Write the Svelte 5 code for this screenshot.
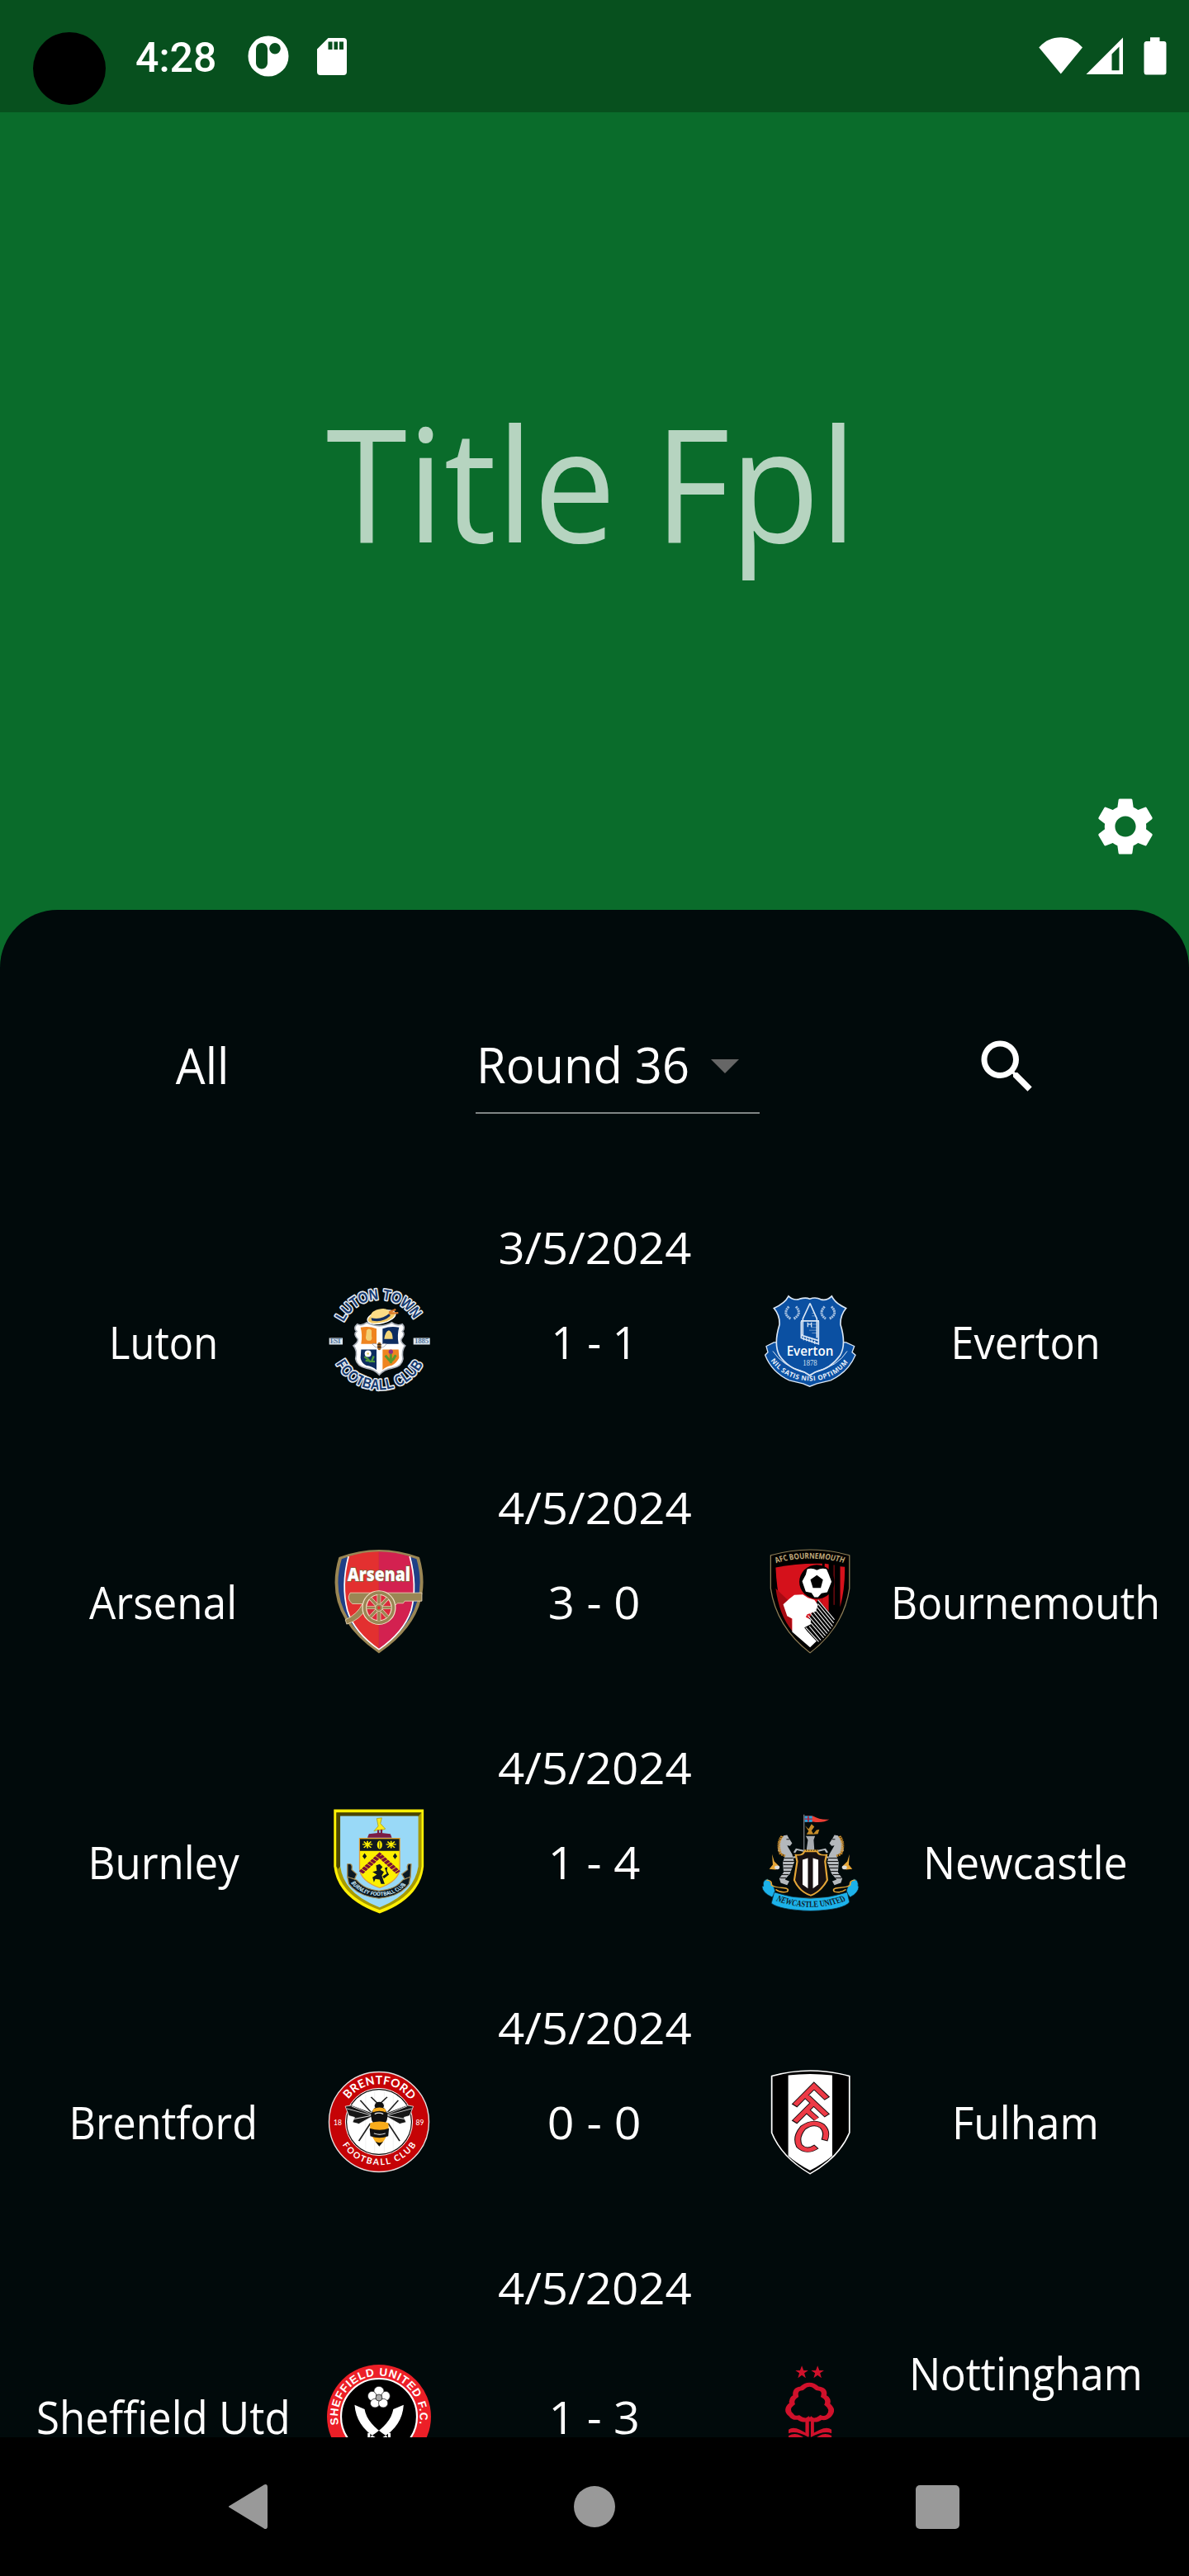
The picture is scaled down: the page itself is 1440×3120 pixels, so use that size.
<script>
  const matches = [
    { date: '3/5/2024', dateW: 232, home: 'Luton', homeW: 130, away: ['Everton'], awayW: 179, score: '1 - 1', scoreW: 102, left: luton, right: everton },
    { date: '4/5/2024', dateW: 233, home: 'Arsenal', homeW: 177, away: ['Bournemouth'], awayW: 324, score: '3 - 0', scoreW: 109, left: arsenal, right: bournemouth },
    { date: '4/5/2024', dateW: 233, home: 'Burnley', homeW: 181, away: ['Newcastle'], awayW: 246, score: '1 - 4', scoreW: 109, left: burnley, right: newcastle },
    { date: '4/5/2024', dateW: 233, home: 'Brentford', homeW: 226, away: ['Fulham'], awayW: 176, score: '0 - 0', scoreW: 111, left: brentford, right: fulham },
    { date: '4/5/2024', dateW: 233, home: 'Sheffield Utd', homeW: 306, away: ['Nottingham', 'Forest'], awayW: 281, score: '1 - 3', scoreW: 108, left: sheffield, right: forest }
  ];

  // Scales a label horizontally so that it is `width` pixels wide, side bearings aside.
  function fit(node, width) {
    const bearing = parseFloat(getComputedStyle(node).fontSize) * 0.04;
    node.style.transform = `scaleX(${width / (node.offsetWidth - bearing)})`;
  }
</script>

{#snippet luton()}
  <g transform="translate(-16 -21.5) scale(.33333)">
    <path id="lutonTop" d="M108 184A144 144 0 0 1 370 184" fill="none" />
    <path id="lutonBottom" d="M80 332A180 180 0 0 0 400 330" fill="none" />
    <g class="curved navy">
      <text><textPath href="#lutonTop" startOffset="2" textLength="314" lengthAdjust="spacingAndGlyphs">LUTON TOWN</textPath></text>
      <text><textPath href="#lutonBottom" startOffset="2" textLength="386" lengthAdjust="spacingAndGlyphs">FOOTBALL CLUB</textPath></text>
    </g>
    <path d="M158 190Q174 198 192 184Q216 196 238 196Q262 196 284 184Q300 198 322 190Q334 204 322 216Q334 226 318 244Q314 256 332 268Q318 284 324 316Q320 344 284 350Q256 354 238 374Q220 354 192 350Q158 344 152 316Q160 284 144 268Q162 256 160 244Q142 226 156 216Q142 204 158 190Z" fill="#fff" stroke="#aab0b8" stroke-width="5" />
    <path d="M170 202Q200 196 228 206V262H172Q178 230 170 202Z" fill="#ef8420" />
    <path d="M250 206Q280 196 310 202Q302 230 308 262H250Z" fill="#0d2c60" />
    <path d="M172 282H228V356Q214 344 190 340Q172 330 170 312Z" fill="#0d2c60" />
    <path d="M250 282H308L310 312Q302 330 284 340Q262 344 250 356Z" fill="#ef8420" />
    <path d="M192 212Q200 202 210 212V234Q214 244 206 250H196Q186 244 190 232Z" fill="#f3cf73" />
    <path d="M256 244Q260 214 273 212Q286 216 287 244Z" fill="#f5d578" />
    <path d="M184 308L196 316L206 328M210 326L218 306M188 322L222 326" stroke="#4e9b3b" stroke-width="7" fill="none" />
    <circle cx="197" cy="297" r="12" fill="#fff" /><circle cx="197" cy="297" r="4" fill="#e6d16a" />
    <path d="M280 294V332M260 304L272 318L280 326M298 302L290 316L280 326" stroke="#5a9a2e" stroke-width="9" fill="none" />
    <circle cx="280" cy="290" r="8" fill="#8c2f87" />
    <path d="M212 262Q226 256 238 270Q250 256 264 262Q256 276 238 276Q222 276 212 262Z" fill="#fff" stroke="#889" stroke-width="2" />
    <ellipse cx="238" cy="270" rx="7" ry="14" fill="#a96420" /><path d="M232 264h12M232 273h12" stroke="#222" stroke-width="4" />
    <g transform="rotate(-14 245 160)">
      <ellipse cx="245" cy="164" rx="52" ry="22" fill="#f3c963" stroke="#fff" stroke-width="4" />
      <path d="M208 162Q204 134 242 134Q280 134 278 162Q244 180 208 162Z" fill="#fbdc86" />
      <path d="M208 158Q242 176 277 158V168Q244 186 208 168Z" fill="#142f60" />
      <path d="M274 158L308 164M276 154L302 150" stroke="#d8792c" stroke-width="7" />
    </g>
    <path d="M56 240H105V264H56ZM362 240H422V264H362Z" fill="#dfe8ef" />
    <g fill="#53759c" font-family="Liberation Serif, serif" font-weight="700" font-size="27">
      <text x="59" y="261" textLength="42">EST</text><text x="366" y="261" textLength="52">1885</text>
    </g>
  </g>
{/snippet}

{#snippet everton()}
  <g transform="translate(-18 -21.5) scale(.33333)">
    <path d="M112 256L84 270L90 292L80 302Q104 364 168 394L218 406L242 416L268 406L318 394Q382 364 408 302L396 292L404 270L374 256Z" fill="#0b50a2" stroke="#dbe7f5" stroke-width="4" />
    <path d="M165 88Q184 106 206 98Q228 92 242 98Q264 90 282 100Q304 106 322 88Q334 114 374 132Q352 158 354 192Q376 264 352 304Q318 352 262 364L242 376L222 364Q164 352 132 304Q110 264 132 192Q134 158 112 132Q152 114 165 88Z" fill="#0b50a2" stroke="#dbe7f5" stroke-width="5" />
    <path d="M108 288Q144 342 214 360L242 378L270 360Q344 342 378 288" fill="none" stroke="#dbe7f5" stroke-width="3" />
    <g fill="none" stroke="#dbe7f5">
      <path d="M243 114L217 170V230M243 114L268 170V240M217 178H272M210 178H276M211 180V240L274 262V180M211 230L276 250" stroke-width="5" />
      <path d="M220 236v12M230 239v12M240 242v12M250 245v12M260 250v12M235 184v16M248 184v16M235 190h13" stroke-width="4" />
      <path d="M250 150h8M250 160h12M252 190h18M246 202h24M240 212h30M250 222h20" stroke-width="2" opacity=".7" />
      <path d="M166 126Q142 152 172 170M192 126Q216 152 184 170M296 126Q272 152 300 170M321 126Q346 152 314 170" stroke-width="9" stroke-dasharray="6 2" opacity=".75" />
    </g>
    <text x="158" y="306" textLength="170" lengthAdjust="spacingAndGlyphs" fill="#fff" font-size="49" font-weight="600" font-family="Open Sans, sans-serif">Everton</text>
    <text x="217" y="340" textLength="52" lengthAdjust="spacingAndGlyphs" fill="#d3e1f2" font-size="29" font-family="Liberation Serif, serif">1878</text>
    <path id="evertonMotto" d="M97 318Q150 394 242 396Q336 394 391 316" fill="none" />
    <text fill="#e9f1fa" font-size="24" font-weight="700" font-family="Open Sans, sans-serif"><textPath href="#evertonMotto" startOffset="5" textLength="326">NIL SATIS NISI OPTIMUM</textPath></text>
  </g>
{/snippet}

{#snippet arsenal()}
  <g transform="translate(-16 -16.5) scale(.43367 .33333)">
    <path d="M74 80Q182 28 291 80Q336 280 182 420Q28 280 74 80Z" fill="#1f3f87" stroke="#9a8654" stroke-width="9" />
    <path d="M96 74Q139 56 182 56V414Q112 348 94 270Q76 180 96 74Z" fill="#e33030" />
    <path d="M182 56Q226 56 270 74Q290 180 272 270Q252 348 182 414Z" fill="#d32150" />
    <path d="M97 74Q76 180 94 270Q112 348 182 412Q252 348 272 270Q290 180 268 74" fill="none" stroke="#fff" stroke-width="4" />
    <path d="M102 206H302V236H254L250 244H234L218 262L150 258Q128 306 92 320L88 304Q122 284 136 246H108Q90 228 102 206Z" fill="#9a8654" stroke="#f0dfc3" stroke-width="2" />
    <ellipse cx="182" cy="260" rx="46" ry="61" fill="#9a8654" stroke="#f0dfc3" stroke-width="3" />
    <ellipse cx="182" cy="260" rx="35" ry="47" fill="#dc2a3c" stroke="#f0dfc3" stroke-width="3" />
    <path d="M182 212V308M148 260H216M158 226L206 294M206 226L158 294" stroke="#f0dfc3" stroke-width="11" />
    <path d="M182 212V308M148 260H216M158 226L206 294M206 226L158 294" stroke="#9a8654" stroke-width="8" />
    <ellipse cx="182" cy="260" rx="10" ry="13" fill="#9a8654" stroke="#f0dfc3" stroke-width="2" />
    <ellipse cx="182" cy="260" rx="4" ry="6" fill="#e33030" />
    <text x="94" y="163" textLength="176" lengthAdjust="spacingAndGlyphs" fill="#fff" stroke="#85633f" stroke-width="5" paint-order="stroke" font-size="68" font-weight="800" font-family="Open Sans, sans-serif">Arsenal</text>
  </g>
{/snippet}

{#snippet bournemouth()}
  <g transform="translate(-538 -16.5) scale(.43367 .33333)">
    <path d="M1276 70Q1386 29 1496 70V190Q1480 330 1386 424Q1292 330 1276 190Z" fill="#000" stroke="#8c7c55" stroke-width="3" />
    <path d="M1290 114Q1350 98 1420 100V270L1336 344Q1294 260 1290 114Z" fill="#d5111b" />
    <path d="M1290 190Q1300 290 1336 344L1330 240Z" fill="#a80a12" />
    <path d="M1427 100L1438 102V300L1420 320V240ZM1451 104V296M1470 110L1483 112Q1484 190 1470 258Z" fill="#d5111b" stroke="none" />
    <path d="M1445 103V262" stroke="#000" stroke-width="10" /><path d="M1453 105V250" stroke="#d5111b" stroke-width="2" />
    <ellipse cx="1405" cy="166" rx="49" ry="62" fill="#000" />
    <path d="M1378 120Q1392 114 1405 124Q1418 114 1432 120L1438 138L1446 166L1434 204L1418 208L1408 222H1398L1390 206L1374 202L1364 164L1374 140Z" fill="#fff" />
    <path d="M1405 142L1422 158L1416 188H1394L1387 158Z" fill="#000" />
    <path d="M1408 230L1456 300L1404 386L1370 340Z" fill="#000" />
    <path d="M1342 214L1366 212L1380 224L1398 232L1408 250L1402 274L1378 284L1374 294L1388 304V320L1370 332L1378 346L1404 382L1386 404L1336 348V300L1322 290L1311 248L1328 228Z" fill="#fff" />
    <g stroke="#e9e9e9" stroke-width="3">
      <path d="M1408 232L1454 304M1408 246L1452 316M1404 256L1449 328M1400 266L1444 336M1394 274L1439 346M1386 280L1434 354M1380 288L1429 362M1388 316L1424 370M1384 328L1416 378M1374 332L1410 384" />
    </g>
    <path id="cherriesName" d="M1291 98Q1386 65 1482 98" fill="none" />
    <text fill="#c2ab7c" font-size="29" font-weight="700" font-family="Open Sans, sans-serif"><textPath href="#cherriesName" textLength="192" lengthAdjust="spacingAndGlyphs">AFC BOURNEMOUTH</textPath></text>
  </g>
{/snippet}

{#snippet burnley()}
  <g transform="translate(-16 -11.5) scale(.43367 .33333)">
    <path d="M56 33H307V240Q298 356 184 411Q66 356 56 240Z" fill="#fff005" />
    <path d="M63 44H301V240Q290 348 184 398Q74 348 63 240Z" fill="#a79a00" />
    <path d="M63 44H301L291 60H74V240L68 250Q63 240 63 240Z" fill="#4a4500" />
    <path d="M74 57H292V240Q280 340 184 389Q84 340 74 240Z" fill="#99d9f7" />
    <path d="M150 136L154 122L184 118L214 122L218 136Z" fill="#7b1c45" />
    <path d="M176 66L190 64L186 84L200 104L190 108H178L168 112L180 94Z" fill="#f8ec1c" stroke="#a69b12" stroke-width="2" />
    <path d="M180 108V120M189 106V120" stroke="#7b1c45" stroke-width="5" />
    <path d="M128 138H240V250Q236 294 184 318Q132 294 128 250Z" fill="#fdf000" stroke="#e3a139" stroke-width="3" />
    <path d="M129 140H239V184H129Z" fill="#101820" />
    <path d="M136 160H164M150 148V174M140 150L160 172M160 150L140 172M202 160H230M216 148V174M206 150L226 172M226 150L206 172" stroke="#fdf000" stroke-width="4" />
    <ellipse cx="184" cy="162" rx="7" ry="15" fill="#fdf000" /><path d="M184 150V174" stroke="#101820" stroke-width="2" />
    <path d="M132 262L184 200L236 262" fill="none" stroke="#7b1038" stroke-width="15" stroke-dasharray="10 2" />
    <path d="M142 192L148 203L142 214L136 203ZM227 192L233 203L227 214L221 203Z" fill="#101820" />
    <path d="M174 236L184 232L192 242L186 252L196 260L190 274L198 304H188L184 288L172 286L168 298L164 280L176 270L164 260L176 256ZM192 276L204 266L198 246L206 242L204 256L210 270L196 284Z" fill="#101820" />
    <g fill="#0b1923" stroke="#a48c55" stroke-width="3">
      <path d="M94 232Q110 226 106 252L120 268L114 286L94 280ZM272 232Q258 226 262 252L246 268L254 286L270 280Z" />
      <path d="M94 278L120 290Q142 324 182 329Q228 324 248 290L270 278L266 304Q240 350 182 356Q126 350 98 304Z" />
    </g>
    <path id="claretsName" d="M103 300Q134 347 184 347Q236 347 265 296" fill="none" />
    <text fill="#c8e9fb" font-size="19" font-weight="700" font-family="Open Sans, sans-serif"><textPath href="#claretsName" textLength="186" lengthAdjust="spacingAndGlyphs">BURNLEY FOOTBALL CLUB</textPath></text>
  </g>
{/snippet}

{#snippet seahorse()}
  <path d="M1312 128L1322 126L1326 136L1336 156L1330 166L1322 164L1336 196L1342 224L1330 266L1316 288L1328 294L1322 308L1304 300L1300 284L1312 262L1310 226L1316 200L1296 184L1300 150Z" fill="#b4b8bc" />
  <path d="M1308 130Q1292 156 1304 196L1316 202" stroke="#c98b2a" stroke-width="8" stroke-dasharray="5 2" fill="none" />
  <path d="M1280 196L1286 222L1300 240L1290 252L1272 250L1282 234Z" fill="#e5a637" /><circle cx="1294" cy="244" r="7" fill="#ddd" />
  <path d="M1314 210H1340M1311 222H1342M1311 234H1340M1312 246H1336M1312 258H1332M1306 270H1326M1302 282H1320M1320 142h8" stroke="#111" stroke-width="3" />
  <path d="M1342 190L1348 178L1368 184M1338 208L1352 204" stroke="#b4b8bc" stroke-width="6" fill="none" />
{/snippet}

{#snippet newcastle()}
  <g transform="translate(-538 -11.5) scale(.43367 .33333)">
    <path d="M1369 52V184" stroke="#767b80" stroke-width="3" />
    <path d="M1371 57H1394Q1414 72 1440 69Q1422 84 1394 78H1371Z" fill="#ee3f36" />
    <path d="M1371 57H1392V79H1371Z" fill="#25a4dc" /><path d="M1371 68H1392M1381 57V79" stroke="#b02138" stroke-width="4" />
    <path d="M1372 92L1382 104L1390 86L1398 96L1390 110L1396 124H1376L1382 112ZM1394 124L1404 108L1412 106L1408 122Z" fill="#c48b29" />
    <path d="M1374 130H1400L1396 144L1398 180H1376L1380 144Z" fill="#a7abb0" />
    {@render seahorse()}
    <g transform="translate(2776 0) scale(-1 1)">{@render seahorse()}</g>
    <path d="M1346 198Q1366 202 1370 186H1406Q1410 202 1432 198L1428 222L1434 290Q1416 332 1388 346Q1356 332 1342 290L1350 222Z" fill="#171112" stroke="#e5a637" stroke-width="5" />
    <path d="M1365 216L1380 210V320L1365 306ZM1394 210L1409 216V306L1394 320Z" fill="#fff" />
    <path d="M1370 182H1408" stroke="#e5a637" stroke-width="6" stroke-dasharray="5 2" />
    <path d="M1280 340Q1300 354 1388 356Q1480 354 1496 340" fill="none" stroke="#e5a637" stroke-width="3" />
    <g fill="#1cb2ea" stroke="#0a2a38" stroke-width="2">
      <path d="M1256 312Q1252 290 1268 286Q1290 316 1288 336L1280 352Q1252 336 1252 312ZM1520 312Q1522 290 1508 286Q1486 316 1488 336L1498 352Q1522 336 1522 312Z" />
      <path d="M1286 334Q1386 378 1490 334L1496 370Q1480 398 1388 402Q1300 398 1278 374Z" />
    </g>
    <path d="M1264 290Q1280 290 1278 308Q1284 316 1310 318Q1330 320 1322 332Q1304 338 1290 324M1512 290Q1496 290 1498 308Q1492 316 1466 318Q1446 320 1454 332Q1472 338 1486 324" fill="none" stroke="#e5a637" stroke-width="4" />
    <path id="toonName" d="M1289 364Q1386 412 1488 364" fill="none" />
    <text fill="#10212a" font-size="32" font-weight="700" font-family="Liberation Serif, serif"><textPath href="#toonName" startOffset="1" textLength="204" lengthAdjust="spacingAndGlyphs">NEWCASTLE UNITED</textPath></text>
  </g>
{/snippet}

{#snippet brentford()}
  <circle cx="63" cy="63" r="60.5" fill="#c50306" stroke="#e8dede" stroke-width="1.4" />
  <circle cx="63" cy="63" r="39.5" fill="#fff" stroke="#111" stroke-width="1.4" />
  <circle cx="63" cy="63" r="40.6" fill="none" stroke="#fff" stroke-width="1" />
  <path id="beesTop" d="M25.5 36.5A46 46 0 0 1 100.5 36.5" fill="none" />
  <path id="beesBottom" d="M18 90A53 53 0 0 0 109 89" fill="none" />
  <g fill="#fff" font-family="Lato, sans-serif" font-weight="700">
    <text font-size="14"><textPath href="#beesTop" startOffset="1" textLength="87">BRENTFORD</textPath></text>
    <text font-size="10.5"><textPath href="#beesBottom" startOffset="1" textLength="106">FOOTBALL CLUB</textPath></text>
    <text x="8" y="66.500" font-size="8.500" font-weight="400">18</text><text x="107.500" y="66.500" font-size="8.500" font-weight="400">89</text>
  </g>
  <g transform="translate(-16 -16.5) scale(.43367 .33333)">
    <path d="M145 140V340M170 126V350M197 126V350M222 140V340" stroke="#e9e9e9" stroke-width="1.500" />
    <path d="M160 148L182 176L205 148M130 160L160 204M236 160L206 204M158 244L126 308M208 244L240 308" stroke="#222" stroke-width="4" fill="none" />
    <path d="M88 182L106 178L164 206V218L126 246L108 240L114 222L98 216ZM278 182L260 178L202 206V218L240 246L258 240L252 222L268 216Z" fill="#171717" stroke="#fff" stroke-width="2" />
    <path d="M92 190L160 214M106 182L160 210M112 228L160 216M274 190L206 214M260 182L206 210M254 228L206 216" stroke="#ddd" stroke-width="2.500" />
    <ellipse cx="183" cy="180" rx="13" ry="14" fill="#111" />
    <ellipse cx="183" cy="218" rx="23" ry="36" fill="#111" />
    <path d="M166 192Q184 180 200 192L202 204Q184 194 164 204Z" fill="#f8ac1b" />
    <path d="M170 210Q182 202 194 210" stroke="#eee" stroke-width="4" fill="none" />
    <path d="M158 242Q184 232 208 242Q214 286 183 326Q152 286 158 242Z" fill="#f8ac1b" />
    <path d="M156 262Q184 274 210 262L208 290Q184 302 158 290Z" fill="#111" />
    <path d="M168 280Q184 288 200 280" stroke="#fff" stroke-width="3" fill="none" />
    <path d="M172 310Q184 318 194 310L183 328Z" fill="#111" />
  </g>
{/snippet}

{#snippet fulham()}
  <g transform="translate(-538 -16.5) scale(.43367 .33333)">
    <path d="M1279 72Q1386 33 1496 72V278Q1468 366 1386 427Q1306 366 1279 278Z" fill="#000" stroke="#fff" stroke-width="4" />
    <path d="M1325 69Q1386 60 1448 69V362Q1422 390 1386 415Q1350 390 1325 362Z" fill="#fff" />
    <g fill="none" stroke-linejoin="miter">
      <g stroke="#191012" stroke-width="19">
        <path d="M1342 180L1397 108L1434 154M1371 139L1434 216M1342 240L1394 172M1376 196L1404 228M1426 306Q1436 274 1420 254Q1396 232 1366 260Q1344 294 1356 326Q1376 352 1404 328" />
      </g>
      <g stroke="#ed3a46" stroke-width="14">
        <path d="M1344 177L1397 108L1432 152M1371 139L1432 214M1344 237L1394 172M1376 196L1404 228M1427 303Q1436 274 1420 254Q1396 232 1366 260Q1344 294 1356 326Q1376 352 1402 330" />
      </g>
    </g>
  </g>
{/snippet}

{#snippet sheffield()}
  <circle cx="63" cy="63" r="63" fill="#ec1f27" />
  <circle cx="63" cy="63" r="46" fill="#000" stroke="#fff" stroke-width="2.200" />
  <path id="bladesName" d="M14.500 73.500A49.500 49.500 0 0 1 63 13.500A49.500 49.500 0 0 1 111.500 73.500" fill="none" />
  <text fill="#fff" font-size="13.500" font-weight="700" font-family="Liberation Sans, sans-serif"><textPath href="#bladesName" startOffset="1" textLength="174">SHEFFIELD UNITED F.C.</textPath></text>
  <g transform="translate(-16 -24) scale(.43367 .33333)">
    <g fill="#fff" stroke="#222" stroke-width="2">
      <ellipse cx="182" cy="168" rx="14" ry="17" /><ellipse cx="163" cy="186" rx="12" ry="17" /><ellipse cx="201" cy="186" rx="12" ry="17" />
      <ellipse cx="171" cy="212" rx="13" ry="16" /><ellipse cx="194" cy="212" rx="13" ry="16" /><ellipse cx="182" cy="192" rx="9" ry="12" fill="#aaa" />
    </g>
    <path d="M114 218L142 234Q148 286 206 334L194 350Q120 310 114 218ZM251 218L222 234Q216 286 158 334L170 350Q246 310 251 218Z" fill="#fff" />
    <path d="M154 320V340M211 320V340" stroke="#fff" stroke-width="7" />
  </g>
{/snippet}

{#snippet forest()}
  <g transform="translate(-538 -24) scale(.43367 .33333)" fill="#d0112b">
    <path id="star" d="M1363 76L1368 93H1381L1370 103L1374 121L1363 110L1352 121L1356 103L1345 93H1358Z" />
    <use href="#star" x="44" />
    <path d="M1363 158Q1384 132 1406 158Q1430 160 1424 186Q1440 198 1434 216Q1454 236 1438 258Q1428 270 1416 264Q1404 278 1386 270Q1366 278 1354 264Q1340 268 1334 256Q1314 236 1336 214Q1332 198 1346 186Q1342 160 1363 158Z" fill="none" stroke="#d0112b" stroke-width="15" />
    <path d="M1373 268L1383 258V332L1373 324ZM1388 258L1397 268V324L1388 332Z" />
    <path d="M1326 308Q1344 290 1382 328V336Q1346 310 1326 322ZM1446 308Q1428 290 1388 328V336Q1426 310 1446 322ZM1326 330Q1344 318 1360 330L1382 348V380H1326ZM1446 330Q1428 318 1412 330L1390 348V380H1446Z" />
  </g>
{/snippet}

<div class="screen">
  <header class="status">
    <div class="camera"></div>
    <span class="clock">4:28</span>
    <svg class="app-icon" viewBox="0 0 50 50">
      <path fill-rule="evenodd" fill="#fff" d="M25 .5a24.500 24.500 0 1 0 0 49a24.500 24.500 0 1 0 0-49ZM17 9a7 7 0 0 1 7 7V33.500a7 7 0 0 1-14 0V16a7 7 0 0 1 7-7ZM33 9a6.800 6.800 0 1 1 0 13.600a6.800 6.800 0 1 1 0-13.600Z" />
    </svg>
    <svg class="card-icon" viewBox="0 0 36 45">
      <path fill-rule="evenodd" fill="#fff" d="M13.500 0H32a4 4 0 0 1 4 4V41a4 4 0 0 1-4 4H4a4 4 0 0 1-4-4V13.500ZM13.500 4.500V14H18.500V4.500ZM20.500 4.500V14H25V4.500ZM27 4.500V14H32V4.500Z" />
    </svg>
    <svg class="signals" viewBox="0 0 156 46">
      <g fill="#fff">
        <path d="M.3 12.500Q11 .2 27 .2T53 12.500L26.800 44.500Z" />
        <path fill-rule="evenodd" d="M57.500 45L102 .5V45ZM88.500 40.300H97.500V11.500L88.500 20.500Z" />
        <path d="M135 .2H146.500V5H151.500A3 3 0 0 1 154.500 8V42.500A3 3 0 0 1 151.500 45.500H130A3 3 0 0 1 127.500 42.500V8A3 3 0 0 1 130 5H135Z" />
      </g>
    </svg>
  </header>

  <section class="hero">
    <h1><span use:fit={636}>Title Fpl</span></h1>
    <svg class="gear" viewBox="0 0 24 24">
      <path fill="#fff" d="M19.140 12.940c.04-.3.06-.61.06-.94 0-.32-.02-.64-.07-.94l2.030-1.580c.18-.14.23-.41.12-.61l-1.920-3.320c-.12-.22-.37-.29-.59-.22l-2.390.96c-.5-.38-1.030-.7-1.620-.94l-.36-2.540c-.04-.24-.24-.41-.48-.41h-3.840c-.24 0-.43.17-.47.41l-.36 2.540c-.59.24-1.130.57-1.620.94l-2.390-.96c-.22-.08-.47 0-.59.22L2.740 8.870c-.12.21-.08.47.12.61l2.030 1.580c-.05.3-.09.63-.09.94s.02.64.07.94l-2.030 1.580c-.18.14-.23.41-.12.61l1.920 3.320c.12.22.37.29.59.22l2.390-.96c.5.38 1.030.7 1.620.94l.36 2.540c.05.24.24.41.48.41h3.840c.24 0 .44-.17.47-.41l.36-2.540c.59-.24 1.130-.56 1.620-.94l2.390.96c.22.08.47 0 .59-.22l1.920-3.320c.12-.22.07-.47-.12-.61l-2.010-1.580zM12 15.600c-1.980 0-3.600-1.620-3.600-3.600s1.620-3.600 3.600-3.600 3.600 1.620 3.600 3.600-1.620 3.600-3.600 3.600z" />
    </svg>
  </section>

  <main class="sheet">
    <div class="filters">
      <div class="all"><span use:fit={62}>All</span></div>
      <div class="round">
        <span use:fit={256}>Round 36</span>
        <svg class="caret" viewBox="0 0 34 17"><path d="M0 0H34L17 17Z" fill="#666" /></svg>
      </div>
      <svg class="search" viewBox="0 0 24 24">
        <path fill="#fff" d="M15.500 14h-.79l-.28-.27C15.410 12.590 16 11.110 16 9.500 16 5.910 13.090 3 9.500 3S3 5.910 3 9.500 5.910 16 9.500 16c1.610 0 3.090-.59 4.230-1.570l.27.28v.79l5 4.990L20.490 19l-4.990-5zm-6 0C7.010 14 5 11.990 5 9.500S7.010 5 9.500 5 14 7.010 14 9.500 11.990 14 9.500 14z" />
      </svg>
    </div>

    {#each matches as m}
      <article class="match">
        <div class="date"><span use:fit={m.dateW}>{m.date}</span></div>
        <div class="teams">
          <div class="name"><span use:fit={m.homeW}>{m.home}</span></div>
          <svg class="badge" viewBox="0 0 126 126">{@render m.left()}</svg>
          <div class="score"><span use:fit={m.scoreW}>{m.score}</span></div>
          <svg class="badge" viewBox="0 0 126 126">{@render m.right()}</svg>
          <div class="name" class:two={m.away.length > 1}>
            {#each m.away as line, i}
              <span use:fit={i === 0 ? m.awayW : 155}>{line}</span>
            {/each}
          </div>
        </div>
      </article>
    {/each}
  </main>

  <nav>
    <svg class="back" viewBox="0 0 50 58"><path d="M45 3.500L3 29L45 54.500Q48 56 48 53V5Q48 2 45 3.500Z" fill="#999" stroke="#999" stroke-width="2" stroke-linejoin="round" /></svg>
    <div class="home"></div>
    <div class="recent"></div>
  </nav>
</div>

<style>
  :global(body) { margin: 0; background: #000; }
  .screen {
    width: 1440px; height: 3120px; overflow: hidden;
    display: flex; flex-direction: column;
    background: #0a6c2b; color: #fff;
    font-family: 'Open Sans', 'Noto Sans', sans-serif;
  }
  span { display: inline-block; white-space: nowrap; }
  .status { flex: none; height: 136px; background: #07501e; display: flex; align-items: flex-start; }
  .camera { width: 88px; height: 88px; border-radius: 50%; background: #000; margin: 39px 0 0 40px; }
  .clock { font: 500 50px/60px Roboto, sans-serif; margin: 40px 0 0 36px; width: 98px; }
  .app-icon { width: 50px; height: 50px; margin: 43px 0 0 37.5px; }
  .card-icon { width: 36px; height: 45px; margin: 46px 0 0 34px; }
  .signals { width: 156px; height: 46px; margin: 45px 26px 0 auto; }

  .hero { flex: none; height: 966px; display: flex; flex-direction: column; align-items: center; }
  h1 {
    margin: 0; padding-top: 305px; height: 518px; box-sizing: border-box;
    font-size: 190px; line-height: 286px; font-weight: 400; color: #b6d4c0;
  }
  h1 span { margin-left: -7px; }
  .gear { width: 84px; height: 84px; align-self: flex-end; margin: 305px 35px 0 0; }

  .sheet {
    flex: none; height: 1850px; overflow: hidden; background: #010a0b;
    border-radius: 70px 70px 0 0;
  }
  .filters {
    height: 360px; box-sizing: border-box; padding-top: 134px;
    display: grid; grid-template-columns: 490px 430px 1fr; align-items: start;
    font-size: 60px; line-height: 108px;
  }
  .all { text-align: center; }
  .round {
    margin-left: 86px; height: 111px; border-bottom: 2px solid #7f8585;
    display: flex; align-items: center;
  }
  .round span { transform-origin: left; width: max-content; margin: -5px 0 0 1px; }
  .caret { width: 34px; height: 17px; margin-left: 16px; }
  .search { width: 84px; height: 84px; margin: 14px 0 0 258px; }

  .match { height: 315px; font-size: 54px; }
  .date { height: 100px; line-height: 97px; text-align: center; font-size: 53px; }
  .teams { display: grid; grid-template-columns: 396px 126px 396px 126px 396px; align-items: center; }
  .name, .score { text-align: center; line-height: 120px; }
  .two { display: flex; flex-direction: column; align-items: center; line-height: 105px; }
  .badge { width: 126px; height: 126px; display: block; overflow: visible; }
  .curved { font-family: 'Liberation Sans', sans-serif; font-weight: 700; font-size: 54px; }
  .navy { fill: #163b72; stroke: #e8edf2; stroke-width: 10px; paint-order: stroke; stroke-linejoin: round; }

  nav { flex: none; height: 168px; background: #000; display: flex; align-items: center; }
  .back { width: 50px; height: 58px; margin-left: 275px; }
  .home { width: 50px; height: 50px; border-radius: 50%; background: #999; margin-left: 370px; }
  .recent { width: 53px; height: 53px; border-radius: 5px; background: #999; margin-left: 364px; }
</style>
